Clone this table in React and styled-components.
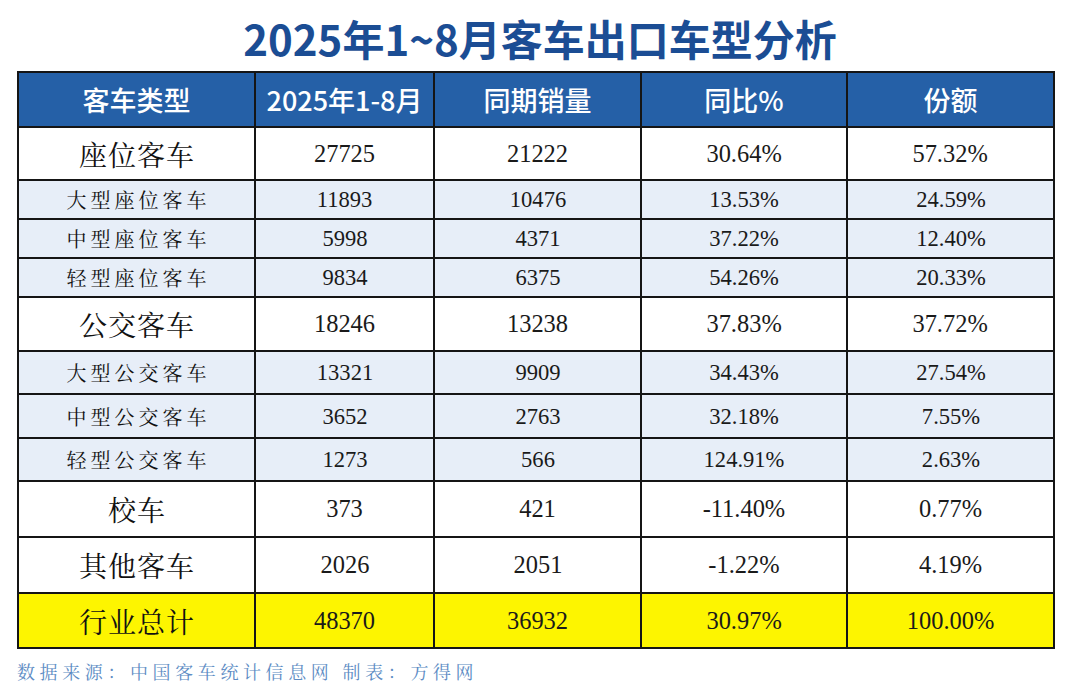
import React from 'react';
import styled, { createGlobalStyle } from 'styled-components';

const GlobalStyle = createGlobalStyle`
  html, body {
    margin: 0;
    padding: 0;
    background: #ffffff;
  }
  body {
    font-family: "Noto Sans CJK SC", "Noto Sans", sans-serif;
  }
`;

const Page = styled.div`
  width: 1080px;
  height: 689px;
  display: flex;
  flex-direction: column;
  align-items: flex-start;
  padding-left: 17px;
  box-sizing: border-box;
  overflow: hidden;
`;

const Title = styled.h1`
  align-self: stretch;
  margin: 12px 17px 0 0;
  height: 59px;
  text-align: center;
  font-size: 42px;
  line-height: 52px;
  font-weight: 700;
  color: #1b4d94;
  letter-spacing: 0;
`;

const Table = styled.table`
  width: 1036px;
  border-collapse: collapse;
  table-layout: fixed;
  border: 2px solid #151515;
`;

const HeadCell = styled.th`
  background: #2560a7;
  color: #ffffff;
  height: 53px;
  padding: 0;
  border: 2px solid #151515;
  font-family: "Noto Sans CJK SC", "Noto Sans", sans-serif;
  font-size: 27px;
  font-weight: 500;
  text-align: center;
`;

const rowBg = {
  main: '#ffffff',
  sub: '#e7eef8',
  total: '#fdf500',
};

const Row = styled.tr`
  background: ${p => rowBg[p.$kind]};
  height: ${p => p.$h}px;
`;

const NameCell = styled.td`
  padding: 0;
  border: 2px solid #151515;
  text-align: center;
  color: #111111;
  font-family: "Noto Serif CJK SC", "Noto Sans CJK SC", serif;
  font-size: ${p => (p.$kind === 'sub' ? '20px' : '28px')};
  letter-spacing: ${p => (p.$kind === 'sub' ? '4px' : '1px')};
  text-indent: ${p => (p.$kind === 'sub' ? '4px' : '1px')};
  font-weight: 400;
`;

const NumCell = styled.td`
  padding: 0;
  border: 2px solid #151515;
  text-align: center;
  color: #1a1a1a;
  font-family: "Liberation Serif", "Times New Roman", serif;
  font-size: ${p => (p.$kind === 'sub' ? '24px' : '26px')};
`;

const Narrow = styled.span`
  display: inline-block;
  transform: scaleX(0.94);
`;

const Footer = styled.div`
  margin-top: 9px;
  font-family: "Noto Serif CJK SC", "Noto Sans CJK SC", serif;
  font-size: 18px;
  letter-spacing: 4.6px;
  color: #5d8cc4;
`;

const heads = ['客车类型', '2025年1-8月', '同期销量', '同比%', '份额'];
const widths = [237, 179, 207, 206, 207];

const rows = [
  { kind: 'main', h: 53, name: '座位客车', v: ['27725', '21222', '30.64%', '57.32%'] },
  { kind: 'sub', h: 39, name: '大型座位客车', v: ['11893', '10476', '13.53%', '24.59%'] },
  { kind: 'sub', h: 39, name: '中型座位客车', v: ['5998', '4371', '37.22%', '12.40%'] },
  { kind: 'sub', h: 39, name: '轻型座位客车', v: ['9834', '6375', '54.26%', '20.33%'] },
  { kind: 'main', h: 54, name: '公交客车', v: ['18246', '13238', '37.83%', '37.72%'] },
  { kind: 'sub', h: 43, name: '大型公交客车', v: ['13321', '9909', '34.43%', '27.54%'] },
  { kind: 'sub', h: 44, name: '中型公交客车', v: ['3652', '2763', '32.18%', '7.55%'] },
  { kind: 'sub', h: 43, name: '轻型公交客车', v: ['1273', '566', '124.91%', '2.63%'] },
  { kind: 'main', h: 56, name: '校车', v: ['373', '421', '-11.40%', '0.77%'] },
  { kind: 'main', h: 56, name: '其他客车', v: ['2026', '2051', '-1.22%', '4.19%'] },
  { kind: 'total', h: 55, name: '行业总计', v: ['48370', '36932', '30.97%', '100.00%'] },
];

const App = () => {
  return (
    <>
      <GlobalStyle />
      <Page>
        <Title>2025年1~8月客车出口车型分析</Title>
        <Table>
          <colgroup>
            {widths.map((w, i) => <col key={i} style={{ width: w }} />)}
          </colgroup>
          <thead>
            <tr>
              {heads.map(h => <HeadCell key={h}>{h}</HeadCell>)}
            </tr>
          </thead>
          <tbody>
            {rows.map(r => (
              <Row key={r.name} $kind={r.kind} $h={r.h}>
                <NameCell $kind={r.kind}>{r.name}</NameCell>
                {r.v.map((val, i) => (
                  <NumCell key={i} $kind={r.kind}><Narrow>{val}</Narrow></NumCell>
                ))}
              </Row>
            ))}
          </tbody>
        </Table>
        <Footer>数据来源：中国客车统计信息网 制表：方得网</Footer>
      </Page>
    </>
  );
};

export default App;
